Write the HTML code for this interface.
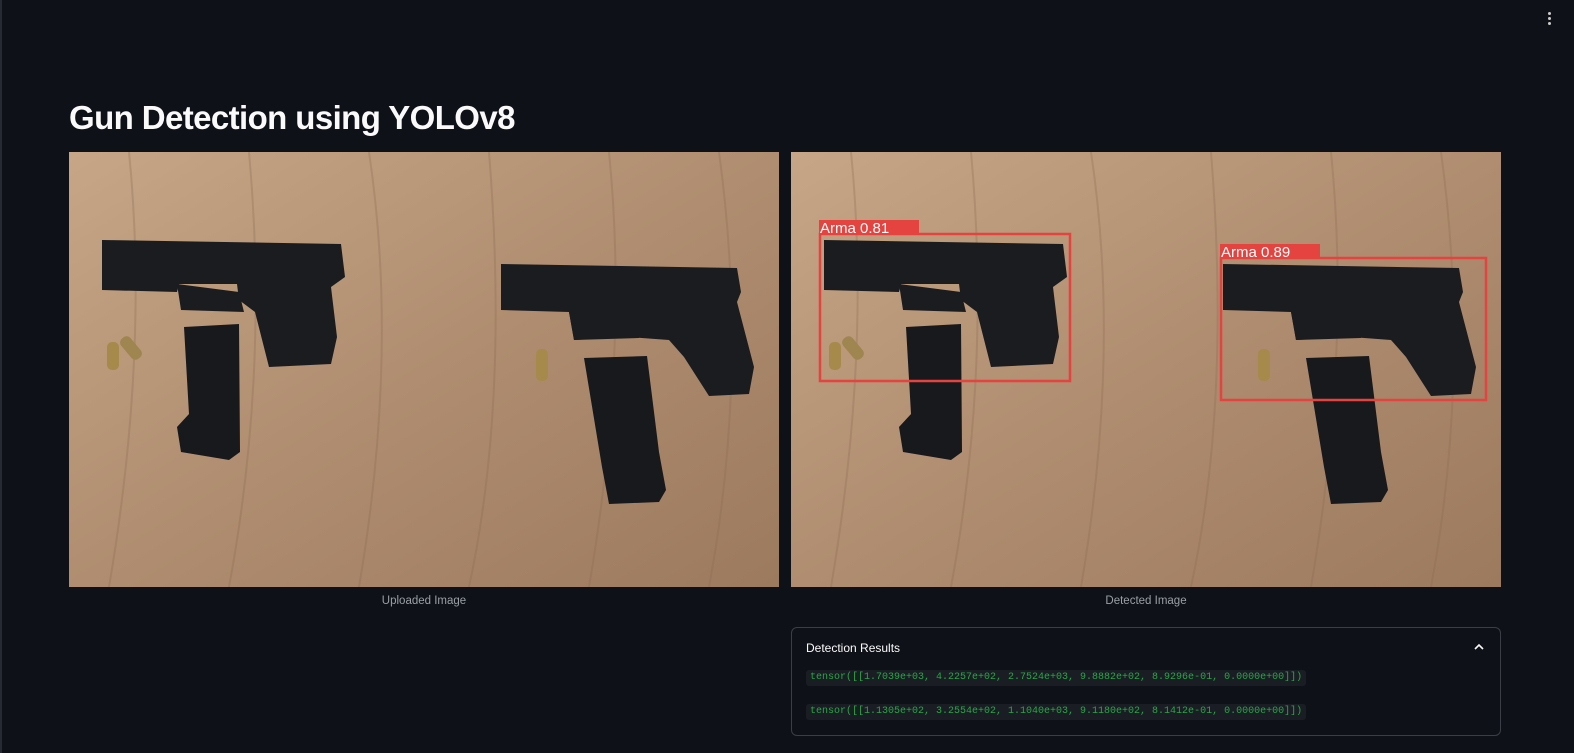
<!DOCTYPE html>
<html><head><meta charset="utf-8"><style>
body{margin:0;width:1574px;height:753px;background:#0e1117;overflow:hidden;font-family:"Liberation Sans",sans-serif;position:relative}
h1{position:absolute;left:69px;top:99px;margin:0;font-size:33px;font-weight:700;color:#fafafa;letter-spacing:-0.6px}
.img{position:absolute;top:152px;width:710px;height:435px}
.cap{position:absolute;top:595px;width:710px;text-align:center;font-size:11.5px;color:#9aa0a6}
.exp{position:absolute;left:791px;top:627px;width:708px;height:107px;border:1px solid #3b3e46;border-radius:6px}
.exp .t{position:absolute;left:14px;top:13px;font-size:12px;color:#fafafa}
.code{position:absolute;left:14px;height:16px;line-height:16px;padding:0 4px;background:#1a1d24;border-radius:3px;font-family:"Liberation Mono",monospace;font-size:10px;color:#27a845}
</style></head><body>
<div style="position:absolute;left:0;top:0;width:2px;height:753px;background:#262a33"></div>
<div style="position:absolute;left:1548px;top:12px;width:3px;">
<div style="width:3px;height:3px;background:#ccc;border-radius:50%;margin-bottom:2px"></div><div style="width:3px;height:3px;background:#ccc;border-radius:50%;margin-bottom:2px"></div><div style="width:3px;height:3px;background:#ccc;border-radius:50%"></div></div>
<h1>Gun Detection using YOLOv8</h1>
<svg width="0" height="0" style="position:absolute"><defs>
<linearGradient id="w" x1="0" y1="0" x2="1" y2="1"><stop offset="0" stop-color="#c6a686"/><stop offset="0.5" stop-color="#b08d70"/><stop offset="1" stop-color="#9c7a5e"/></linearGradient>
<symbol id="scene" viewBox="0 0 710 435">
<rect width="710" height="435" fill="url(#w)"/>
<g stroke="#8a6a50" stroke-width="2" opacity="0.3" fill="none">
<path d="M60 0 Q80 200 40 435"/><path d="M180 0 Q200 220 160 435"/><path d="M300 0 Q330 200 290 435"/><path d="M420 0 Q440 250 400 435"/><path d="M540 0 Q560 200 520 435"/><path d="M650 0 Q680 220 640 435"/></g>
<path d="M33 88 L272 92 L276 125 L262 135 L268 185 L262 212 L200 215 L186 160 L170 148 L168 132 L110 132 L108 140 L33 138 Z" fill="#1b1c20"/>
<path d="M108 132 L112 158 L175 160 L170 140 Z" fill="#1b1c20"/>
<path d="M115 175 L170 172 L171 300 L160 308 L112 300 L108 275 L120 262 Z" fill="#18191d"/>
<rect x="38" y="190" width="12" height="28" rx="5" fill="#a68a4c"/>
<rect x="56" y="183" width="12" height="26" rx="5" fill="#9f8550" transform="rotate(-40 62 196)"/>
<path d="M432 112 L668 116 L672 140 L668 150 L685 215 L680 242 L640 244 L615 205 L600 188 L560 185 L505 188 L500 160 L432 158 Z" fill="#1b1c20"/>
<path d="M500 160 L505 188 L570 186 L560 160 Z" fill="#1b1c20"/>
<path d="M515 206 L578 204 L590 300 L597 338 L590 350 L540 352 L533 315 Z" fill="#18191d"/>
<rect x="467" y="197" width="12" height="32" rx="5" fill="#a68a4c"/>
</symbol></defs></svg>
<svg class="img" style="left:69px"><use href="#scene"/></svg>
<svg class="img" style="left:791px"><use href="#scene"/>
<g fill="none" stroke="#e4433f" stroke-width="2.5"><rect x="29" y="82" width="250" height="147"/><rect x="430" y="106" width="265" height="142"/></g>
<rect x="28" y="68" width="100" height="14" fill="#e4433f"/><rect x="429" y="92" width="100" height="14" fill="#e4433f"/>
<text x="29" y="81" fill="#fff" font-family="Liberation Sans,sans-serif" font-size="15">Arma  0.81</text>
<text x="430" y="105" fill="#fff" font-family="Liberation Sans,sans-serif" font-size="15">Arma  0.89</text>
</svg>
<div class="cap" style="left:69px">Uploaded Image</div>
<div class="cap" style="left:791px">Detected Image</div>
<div class="exp"><div class="t">Detection Results</div>
<svg style="position:absolute;right:16px;top:15px" width="10" height="8"><path d="M1 6 L5 2 L9 6" stroke="#fafafa" stroke-width="1.6" fill="none"/></svg>
<div class="code" style="top:42px">tensor([[1.7039e+03, 4.2257e+02, 2.7524e+03, 9.8882e+02, 8.9296e-01, 0.0000e+00]])</div>
<div class="code" style="top:76px">tensor([[1.1305e+02, 3.2554e+02, 1.1040e+03, 9.1180e+02, 8.1412e-01, 0.0000e+00]])</div>
</div>
</body></html>
